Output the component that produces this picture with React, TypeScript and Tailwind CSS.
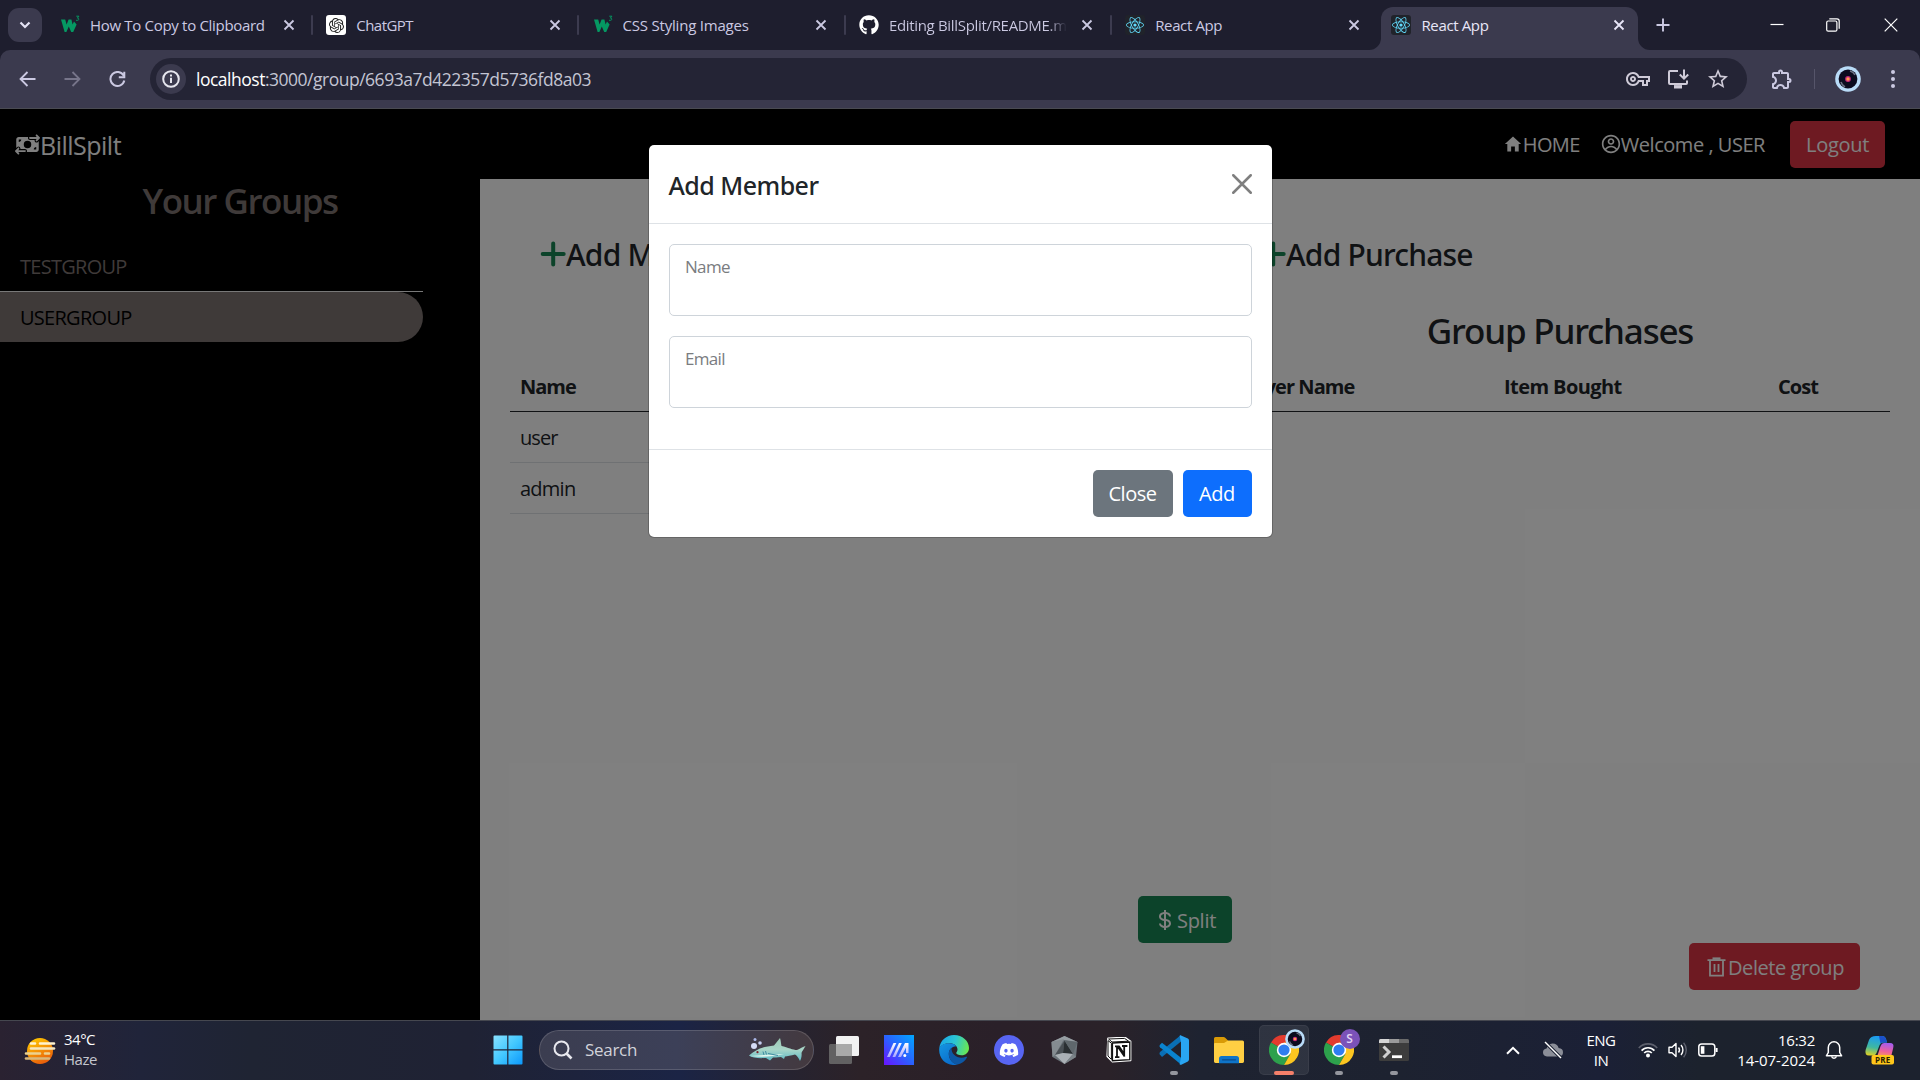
import type { ReactNode } from 'react';
import { FaMoneyBillTransfer } from 'react-icons/fa6';
import { IoMdHome } from 'react-icons/io';
import { CgProfile } from 'react-icons/cg';
import { BiDollar } from 'react-icons/bi';
import { FaReact, FaGithub, FaDiscord } from 'react-icons/fa';
import { SiOpenai } from 'react-icons/si';
import { MdOutlineVpnKey, MdStarBorder, MdOutlineExtension } from 'react-icons/md';

/* ---------- Browser chrome ---------- */

function W3Icon() {
  return (
    <svg width="20" height="20" viewBox="0 0 20 20" fill="none">
      <path d="M1 4.5 H5.2 L6.6 9.5 L8.6 4.5 H11.4 L12.6 9.5 L14 6.5 L16.6 9.5 L13.2 17 H11.2 L8.8 11.5 L6.4 17 H4.6 Z" fill="#059862" />
      <path d="M16.3 1.2 h2.6 l-1.5 1.9 c2.2 0 2 2.7 -1.3 2.2" stroke="#059862" strokeWidth="1" />
    </svg>
  );
}

function ChatIcon() {
  return (
    <div className="flex size-5 items-center justify-center rounded-[3px] bg-white text-[#1e1e1e]">
      <SiOpenai size={15} />
    </div>
  );
}

function ReactIcon() {
  return (
    <div className="flex size-5 items-center justify-center rounded-[3px] bg-[#20232a] text-[#61dafb]">
      <FaReact size={18} />
    </div>
  );
}

function CloseMark({ color }: { color: string }) {
  return (
    <svg width="12" height="12" viewBox="0 0 12 12" stroke={color} strokeWidth="1.8" className="shrink-0">
      <path d="M1.5 1.5 L10.5 10.5 M10.5 1.5 L1.5 10.5" />
    </svg>
  );
}

function Tab({ icon, children, divider }: { icon: ReactNode; children: ReactNode; divider?: boolean }) {
  return (
    <div className="flex h-full w-[266.3px] shrink-0 items-center pl-[13px]">
      <div className="w-[30px] shrink-0">{icon}</div>
      <div className="w-[178px] shrink-0 overflow-hidden text-[15px] leading-5 whitespace-nowrap text-[#cbc9e2]">{children}</div>
      <div className="flex w-[42px] shrink-0 justify-center pr-[1px]">
        <CloseMark color="#cbc9e2" />
      </div>
      {divider && <div className="ml-[1px] h-5 w-[2px] shrink-0 rounded bg-[#3c3b4f]" />}
    </div>
  );
}

function TabStrip() {
  return (
    <div className="flex h-[50px] w-full bg-[#1e1e2e]">
      <div className="flex w-[47px] shrink-0 items-center pl-2">
        <div className="flex h-[34px] w-[34px] items-center justify-center rounded-[11px] bg-[#3b3a4e]">
          <svg width="14" height="10" viewBox="0 0 14 10" fill="none" stroke="#e4e2f4" strokeWidth="2.2">
            <path d="M2.5 2.5 L7 7 L11.5 2.5" />
          </svg>
        </div>
      </div>
      <Tab divider icon={<W3Icon />}>
        <span className="tracking-[-0.31px]">How To Copy to Clipboard</span>
      </Tab>
      <Tab divider icon={<ChatIcon />}>
        <span className="tracking-[-0.55px]">ChatGPT</span>
      </Tab>
      <Tab divider icon={<W3Icon />}>
        <span className="tracking-[-0.21px]">CSS Styling Images</span>
      </Tab>
      <Tab divider icon={<FaGithub size={20} color="#fff" />}>
        <span className="bg-linear-to-r from-[#cbc9e2] from-90% to-[#1e1e2e] bg-clip-text tracking-[-0.32px] text-transparent">
          Editing BillSplit/README.m
        </span>
      </Tab>
      <Tab icon={<ReactIcon />}>
        <span className="tracking-[-0.37px]">React App</span>
      </Tab>
      <div className="relative ml-[3px] flex w-[257px] shrink-0 items-center self-end">
        <svg width="12" height="12" viewBox="0 0 12 12" className="absolute bottom-0 -left-3" fill="#3b3a4e">
          <path d="M12 0 V12 H0 A12 12 0 0 0 12 0 Z" />
        </svg>
        <svg width="12" height="12" viewBox="0 0 12 12" className="absolute -right-3 bottom-0" fill="#3b3a4e">
          <path d="M0 0 V12 H12 A12 12 0 0 1 0 0 Z" />
        </svg>
        <div className="flex h-[43px] w-full items-center rounded-t-[12px] bg-[#3b3a4e] pb-[7px] pl-[10px]">
          <div className="w-[30px] shrink-0">
            <ReactIcon />
          </div>
          <div className="w-[192px] text-[15px] leading-5 tracking-[-0.37px] text-[#e8e6f8]">React App</div>
          <CloseMark color="#e8e6f8" />
        </div>
      </div>
      <div className="flex flex-1 items-center pl-[18px]">
        <svg width="14" height="14" viewBox="0 0 14 14" stroke="#cbc9e2" strokeWidth="1.9">
          <path d="M7 0.5 V13.5 M0.5 7 H13.5" />
        </svg>
        <svg width="14" height="14" viewBox="0 0 14 14" stroke="#fff" strokeWidth="1.2" className="ml-[100px]">
          <path d="M0.5 6.5 H13.5" />
        </svg>
        <svg width="14" height="14" viewBox="0 0 14 14" fill="none" stroke="#fff" strokeWidth="1.2" className="ml-[42px]">
          <rect x="0.7" y="3" width="10.2" height="10.2" rx="1.5" />
          <path d="M3.3 0.8 H11 Q13.2 0.8 13.2 3 V10.8" />
        </svg>
        <svg width="14" height="14" viewBox="0 0 14 14" stroke="#fff" strokeWidth="1.2" className="ml-[44px]">
          <path d="M0.7 0.7 L13.3 13.3 M13.3 0.7 L0.7 13.3" />
        </svg>
      </div>
    </div>
  );
}

function Avatar({ size }: { size: number }) {
  return (
    <svg width={size} height={size} viewBox="0 0 26 26">
      <circle cx="13" cy="13" r="12.8" fill="#b9dcf8" />
      <circle cx="13" cy="13" r="9.4" fill="#0b0b1e" />
      <path d="M15 5 a8 8 0 0 1 5 4 M6 16 a8 8 0 0 0 4 5" stroke="#6b7183" strokeWidth="1.6" fill="none" />
      <circle cx="13" cy="13" r="2.9" fill="#c0267a" />
      <circle cx="13" cy="13" r="1.7" fill="#ff9a4a" />
    </svg>
  );
}

function Toolbar() {
  return (
    <div className="bg-[#1e1e2e]">
      <div className="flex h-[58px] items-center rounded-t-[10px] bg-[#3b3a4e]">
        <div className="flex w-[150px] shrink-0 items-center pl-[19px]">
          <svg width="17" height="16" viewBox="0 0 17 16" fill="none" stroke="#cbc9e2" strokeWidth="1.8">
            <path d="M16.5 8 H2 M8.5 1 L1.5 8 L8.5 15" />
          </svg>
          <svg width="17" height="16" viewBox="0 0 17 16" fill="none" stroke="#77758a" strokeWidth="1.8" className="ml-[28px]">
            <path d="M0.5 8 H15 M8.5 1 L15.5 8 L8.5 15" />
          </svg>
          <svg width="17" height="17" viewBox="0 0 17 17" fill="none" stroke="#cbc9e2" strokeWidth="2" className="ml-[28px]">
            <path d="M14.6 4.6 A7 7 0 1 0 15.3 9.5 M15.3 0.8 V6.3 H9.8" />
          </svg>
        </div>
        <div className="flex h-[42px] w-[1597px] shrink-0 items-center rounded-full bg-[#242435] pl-[6px]">
          <div className="flex size-[30px] items-center justify-center rounded-full bg-[#3b3a4e]">
            <svg width="18" height="18" viewBox="0 0 18 18" fill="none" stroke="#e6e6ee" strokeWidth="2">
              <circle cx="9" cy="9" r="7.8" />
              <path d="M9 7.8 V13 M9 4.6 V6.4" />
            </svg>
          </div>
          <div className="ml-[10px] flex-1 text-[17.5px] leading-6 tracking-[-0.49px] text-[#c3c5d3]">
            <span className="text-white">localhost</span>:3000/group/6693a7d422357d5736fd8a03
          </div>
          <MdOutlineVpnKey size={24} color="#cfcbd8" />
          <svg width="22" height="20" viewBox="0 0 22 20" fill="none" stroke="#cfcbd8" strokeWidth="2" className="ml-[17px]">
            <path d="M11 2 H3 Q2 2 2 3 V14 Q2 15 3 15 H19 Q20 15 20 14 V11.5" />
            <path d="M7 17.8 H15" strokeWidth="3.4" />
            <path d="M17 0.5 V9 M12.8 5.5 L17 9.7 L21.2 5.5" />
          </svg>
          <MdStarBorder size={24} color="#cfcbd8" className="mr-[17px] ml-[17px]" />
        </div>
        <MdOutlineExtension size={24} color="#cbc9e2" className="ml-[22.5px]" />
        <div className="ml-[20px] h-5 w-[1.5px] bg-[#56556a]" />
        <div className="ml-[19.5px]">
          <Avatar size={26} />
        </div>
        <svg width="6" height="20" viewBox="0 0 6 20" fill="#cbc9e2" className="ml-[29px]">
          <circle cx="3" cy="3" r="2" />
          <circle cx="3" cy="10" r="2" />
          <circle cx="3" cy="17" r="2" />
        </svg>
      </div>
      <div className="h-px bg-[#4a4b52]" />
    </div>
  );
}

/* ---------- Page ---------- */

function Navbar() {
  return (
    <div className="flex h-[70px] shrink-0 items-center bg-black pl-[15px] text-white">
      <FaMoneyBillTransfer size={25} />
      <div className="pt-px text-[25px] leading-9 tracking-[-0.51px]">BillSpilt</div>
      <div className="flex flex-1 items-center justify-end pr-[35px] text-[20px]">
        <IoMdHome size={20} className="mt-[-1px]" />
        <span className="mt-[2px] tracking-[-0.6px]">HOME</span>
        <CgProfile size={20} className="mt-[-1px] ml-[21px]" />
        <span className="mt-[2px] tracking-[-0.46px]">Welcome , USER</span>
        <div className="ml-[25px] flex h-[47px] w-[95px] items-center justify-center rounded-[5px] bg-[#dc3545] pt-[2px] tracking-[-0.29px]">
          Logout
        </div>
      </div>
    </div>
  );
}

function Sidebar() {
  return (
    <div className="w-[480px] shrink-0 bg-black">
      <div className="pt-[1px] text-center text-[35px] leading-[42px] font-semibold tracking-[-1.5px] text-[#7e7472]">Your Groups</div>
      <div className="mt-[19px] w-[423px] text-[20px]">
        <div className="flex h-[51px] items-center border-b border-[#f0f0f0] pt-[2px] pl-5 tracking-[-0.72px] text-[#7e7472]">
          TESTGROUP
        </div>
        <div className="flex h-[50px] items-center rounded-r-[25px] bg-[#7e7472] pt-[2px] pl-5 tracking-[-0.72px] text-black">
          USERGROUP
        </div>
      </div>
    </div>
  );
}

function AddHeading({ children }: { children: ReactNode }) {
  return (
    <div className="flex h-[36px] items-center pl-[30px]">
      <svg width="26" height="30" viewBox="0 0 26 30" stroke="#198754" strokeWidth="4" strokeLinecap="round">
        <path d="M13.2 4.5 V25.5 M2.7 15 H23.7" />
      </svg>
      <div className='pt-px text-[30px] leading-9 font-medium tracking-[-0.8px] whitespace-nowrap [font-family:"Noto_Sans",sans-serif]'>
        {children}
      </div>
    </div>
  );
}

function Members() {
  return (
    <div className="w-[720px] px-[30px] pt-[57px]">
      <AddHeading>Add Member</AddHeading>
      <div className="mt-[90px] text-[20px]">
        <div className="flex h-[50px] items-center border-b border-[#212529] pl-[10px] font-bold tracking-[-1px]">Name</div>
        <div className="flex h-[51px] items-center border-b border-[#dee2e6] pt-[2px] pl-[10px] tracking-[-0.9px]">user</div>
        <div className="flex h-[51px] items-center border-b border-[#dee2e6] pt-[2px] pl-[10px] tracking-[-0.75px]">admin</div>
      </div>
    </div>
  );
}

function Purchases() {
  return (
    <div className="w-[720px] px-[30px] pt-[57px]">
      <AddHeading>Add Purchase</AddHeading>
      <div className='mt-[38px] text-center text-[35px] leading-[42px] font-medium tracking-[-1.2px] [font-family:"Noto_Sans",sans-serif]'>
        Group Purchases
      </div>
      <div className="mt-[10px] flex h-[50px] items-center border-b border-[#212529] pl-[10px] text-[20px] font-bold">
        <div className="w-[264px] tracking-[-0.95px]">Buyer Name</div>
        <div className="w-[274px] tracking-[-0.58px]">Item Bought</div>
        <div className="tracking-[-0.94px]">Cost</div>
      </div>
    </div>
  );
}

function PageContent() {
  return (
    <div className="flex flex-1 flex-col bg-white text-[#212529]">
      <div className="flex flex-1">
        <Members />
        <Purchases />
      </div>
      <div className="flex pl-[658px] text-[20px] text-white">
        <div className="flex h-[47px] w-[94px] items-center rounded-[5px] bg-[#198754] pl-[15px]">
          <BiDollar size={24} />
          <span className="pt-[2px] tracking-[-0.29px]">Split</span>
        </div>
      </div>
      <div className="flex justify-end pr-[60px] pb-[30px] text-[20px] text-white">
        <div className="flex h-[47px] w-[171px] items-center rounded-[5px] bg-[#dc3545] pl-[18px]">
          <svg width="20" height="22" viewBox="0 0 20 22" fill="none" stroke="#fff" strokeWidth="1.8">
            <path d="M0.5 4.2 H18.5 M3 4.2 V19.6 H16 V4.2" />
            <path d="M5.5 2.6 H13.5" strokeWidth="2.4" />
            <path d="M7.5 8 V16 M11.5 8 V16" />
          </svg>
          <span className="ml-px pt-[2px] tracking-[-0.43px]">Delete group</span>
        </div>
      </div>
    </div>
  );
}

function Field({ label }: { label: string }) {
  return (
    <div className="h-[72px] rounded-[5px] border border-[#ced4da] pt-[10px] pl-[15.5px] text-[17px] leading-6 tracking-[-0.68px] text-[#7a7c7f]">
      {label}
    </div>
  );
}

function Modal() {
  return (
    <div className="absolute inset-0 flex items-start justify-center bg-black/50">
      <div className="mt-[35px] h-[394px] w-[625px] rounded-[6px] border border-black/20 bg-white bg-clip-padding text-[#212529]">
        <div className="flex h-[79px] items-center justify-between border-b border-[#dee2e6] px-5">
          <div className='pt-px text-[25px] leading-9 font-medium tracking-[-0.53px] [font-family:"Noto_Sans",sans-serif]'>Add Member</div>
          <svg width="20" height="20" viewBox="0 0 16 16" fill="none" stroke="#7f7f7f" strokeWidth="2" strokeLinecap="round">
            <path d="M1 1 L15 15 M15 1 L1 15" />
          </svg>
        </div>
        <div className="flex h-[225px] flex-col gap-[20px] px-5 pt-5">
          <Field label="Name" />
          <Field label="Email" />
        </div>
        <div className="flex h-[88px] items-center justify-end gap-[10px] border-t border-[#dee2e6] px-5 text-[20px] text-white">
          <div className="flex h-[47px] w-[80px] items-center justify-center rounded-[5px] bg-[#6c757d] pt-px tracking-[-0.49px]">Close</div>
          <div className="flex h-[47px] w-[69px] items-center justify-center rounded-[5px] bg-[#0d6efd] pt-px tracking-[-0.38px]">Add</div>
        </div>
      </div>
    </div>
  );
}

/* ---------- Taskbar ---------- */

function Cell({ children, active, dot }: { children: ReactNode; active?: boolean; dot?: boolean }) {
  return (
    <div className="relative flex h-[59px] w-[55px] shrink-0 items-center justify-center pb-[1px]">
      {active && <div className="absolute top-[4px] left-[2.5px] h-[50px] w-[50px] rounded-[5px] border border-white/5 bg-white/8" />}
      <div className="relative flex">{children}</div>
      {active && <div className="absolute bottom-[5px] h-1 w-5 rounded-full bg-[#f5806a]" />}
      {dot && <div className="absolute bottom-[5px] h-1 w-2 rounded-full bg-[#94969e]" />}
    </div>
  );
}

function WeatherIcon() {
  return (
    <svg width="32" height="28" viewBox="0 0 32 28">
      <defs>
        <linearGradient id="sun" x1="0.2" y1="0" x2="0.7" y2="1">
          <stop offset="0" stopColor="#ffc800" />
          <stop offset="1" stopColor="#e8590c" />
        </linearGradient>
      </defs>
      <circle cx="16" cy="14" r="13" fill="url(#sun)" />
      <g strokeWidth="2.6" strokeLinecap="round">
        <path d="M7 6.5 H11 M16 6.5 H30" stroke="#fff3cf" />
        <path d="M7 11.5 H30" stroke="#f6e7be" />
        <path d="M2 16.5 H16 M21 16.5 H25" stroke="#ecd28f" />
        <path d="M2 21.5 H25" stroke="#d9b87a" />
      </g>
    </svg>
  );
}

function WindowsLogo() {
  return (
    <svg width="30" height="30" viewBox="0 0 30 30" fill="url(#win)">
      <defs>
        <linearGradient id="win" gradientUnits="userSpaceOnUse" x1="0" y1="0" x2="30" y2="30">
          <stop offset="0" stopColor="#8be2ff" />
          <stop offset="0.5" stopColor="#43c8ff" />
          <stop offset="1" stopColor="#0a96fb" />
        </linearGradient>
      </defs>
      <path d="M1.5 0.5 H14.2 V14.2 H0.5 V1.5 Q0.5 0.5 1.5 0.5 Z M15.4 0.5 H28.5 Q29.5 0.5 29.5 1.5 V14.2 H15.4 Z M0.5 15.4 H14.2 V29.5 H1.5 Q0.5 29.5 0.5 28.5 Z M15.4 15.4 H29.5 V28.5 Q29.5 29.5 28.5 29.5 H15.4 Z" />
    </svg>
  );
}

function Shark() {
  return (
    <svg width="58" height="26" viewBox="0 0 58 26">
      <defs>
        <linearGradient id="shark" x1="0" y1="0" x2="0" y2="1">
          <stop offset="0" stopColor="#9cc9b4" />
          <stop offset="0.5" stopColor="#a9d6c8" />
          <stop offset="1" stopColor="#5fb9c6" />
        </linearGradient>
      </defs>
      <path
        d="M1 18.5 C8 12 16 9.5 26 8.5 L32 1 C33 4 33 7 33.5 9 C40 10.5 45 13 49 13 C52 12 55 9.5 57.5 9 C56 12 54 14 53.5 16 C54 19 53 22 52 24 C50.5 21 49 18.5 47 17.5 C43 18.5 39 19.2 37 19.5 L36 22 L33 20 C29 20.5 27 20.5 25 20.5 L22 23.5 L18 21 C11 21.5 4 21 1 18.5 Z"
        fill="url(#shark)"
      />
      <path d="M2 19 C12 20.5 24 20 36 17 C24 17.5 12 18 2 19 Z" fill="#dff5ee" />
      <path d="M15 14.5 L16 18 M17.5 14 L18.5 17.5 M20 16.5 L30 18.5" stroke="#3f8ba0" strokeWidth="1" />
      <circle cx="9.5" cy="15.2" r="1.1" fill="#7b1f2a" />
      <circle cx="6" cy="9" r="3" fill="#d5dcf6" />
      <circle cx="12" cy="6" r="1.8" fill="#c3cdf0" />
      <circle cx="7" cy="2.4" r="1.5" fill="#aab8e8" />
    </svg>
  );
}

function TaskView() {
  return (
    <svg width="30" height="28" viewBox="0 0 30 28">
      <rect x="7" y="0" width="23" height="20" rx="1.5" fill="#f2f2f2" />
      <rect x="0" y="8" width="23" height="20" rx="1.5" fill="#6a6a6a" fillOpacity="0.88" />
      <rect x="7" y="8" width="16" height="12" fill="#a9a9a9" />
    </svg>
  );
}

function MyAsus() {
  return (
    <svg width="30" height="30" viewBox="0 0 30 30">
      <defs>
        <linearGradient id="asus" x1="0" y1="1" x2="1" y2="0">
          <stop offset="0" stopColor="#6a12ff" />
          <stop offset="0.5" stopColor="#2a62ff" />
          <stop offset="1" stopColor="#00a8ff" />
        </linearGradient>
        <linearGradient id="asusBar" x1="0" y1="1" x2="0" y2="0">
          <stop offset="0" stopColor="#a9a6ff" />
          <stop offset="1" stopColor="#ffffff" />
        </linearGradient>
      </defs>
      <rect width="30" height="30" fill="url(#asus)" />
      <path d="M3 22 L9.5 8 H12.3 L5.8 22 Z" fill="url(#asusBar)" />
      <path d="M8.5 22 L15 8 H17.8 L11.3 22 Z" fill="url(#asusBar)" />
      <path d="M14 22 L21 8 H24.5 V18 H22 V12.5 L17 22 Z" fill="url(#asusBar)" />
      <circle cx="20.8" cy="20.6" r="1.5" fill="#fff" />
    </svg>
  );
}

function Edge() {
  return (
    <svg width="30" height="30" viewBox="0 0 30 30">
      <defs>
        <linearGradient id="edgeTop" x1="0" y1="0.4" x2="1" y2="0.6">
          <stop offset="0" stopColor="#1aa7e8" />
          <stop offset="0.5" stopColor="#2cc6d2" />
          <stop offset="1" stopColor="#6be84e" />
        </linearGradient>
        <linearGradient id="edgeLow" x1="0" y1="0" x2="0.6" y2="1">
          <stop offset="0" stopColor="#1597e2" />
          <stop offset="1" stopColor="#0a6ccb" />
        </linearGradient>
      </defs>
      <path d="M0.3 13 C1.2 5.5 7.4 0 15 0 C23.5 0 30 6 30 13 C30 17.6 26.6 20.3 22.6 20.3 C19.4 20.3 17.2 19 17.2 18 C17.2 17.4 18.5 16.6 18.5 14.5 C18.5 11 15 8.3 10.5 8.3 C6 8.3 2.4 10.2 0.3 13 Z" fill="url(#edgeTop)" />
      <path d="M0.3 13 C2.4 9.5 6 8.3 10.5 8.3 C13.5 8.3 16 9.6 17.3 11.3 C12.5 11.5 9.8 15 9.8 19 C9.8 24.3 14 28.6 18.6 29.6 C8 32 -1 24 0.3 13 Z" fill="url(#edgeLow)" />
      <path d="M12.5 12.8 C10.6 14.2 9.8 16.6 9.8 19 C9.8 24.6 14.2 29 18.6 29.6 C23 28.6 26 26 28 22.6 C28.4 21.8 27.8 21.4 27 21.8 C19.5 24.8 12 20 12.5 12.8 Z" fill="#0d57a4" />
    </svg>
  );
}

function Gem() {
  return (
    <svg width="27" height="28" viewBox="0 0 27 28">
      <path d="M13.5 0 L26.5 6 L25 21 L13.5 28 L1.5 21 L0.5 6 Z" fill="#6b7379" />
      <path d="M13.5 0 L26.5 6 L14 4 L0.5 6 Z" fill="#969da2" />
      <path d="M13 3 L0.5 6 L1.5 21 L4 19 Z" fill="#858c91" />
      <path d="M13.5 4.5 L4 19 L12 17 Z" fill="#4a5055" />
      <path d="M13.5 4.5 L12 17 L22 18 Z" fill="#2a2f32" />
      <path d="M13.5 4.5 L22 18 L26.5 6 Z" fill="#5f676c" />
      <path d="M4 19 L12 17 L22 18 L13.5 28 Z" fill="#aab0b5" />
      <path d="M22 18 L25 21 L13.5 28 Z" fill="#7b8388" />
    </svg>
  );
}

function Notion() {
  return (
    <svg width="26" height="26" viewBox="0 0 26 26">
      <path d="M2 1.2 L19 0.4 L24.6 4.4 V23.4 L6.4 24.8 L1.2 19.5 Z" fill="#fff" stroke="#fff" strokeWidth="1.6" strokeLinejoin="round" />
      <path d="M2.6 2 L18.6 1.4 L22.6 4.2 L6 5 Z M2 3.6 L5.4 6.2 V22.4 L2 19 Z" fill="#fff" stroke="#111" strokeWidth="1" />
      <path d="M6.4 6 L23.8 5 V22.6 L6.4 23.8 Z" fill="#fff" stroke="#111" strokeWidth="1.4" />
      <path d="M9 9.4 H13 L18.2 17 V9.8 M16 9 H21.4 M11 9.6 V20.2 M9 20.2 H13.4 M18.6 19.4 L12 10" stroke="#111" strokeWidth="1.8" fill="none" />
    </svg>
  );
}

function VSCode() {
  return (
    <svg width="30" height="30" viewBox="0 0 30 30">
      <path d="M0.8 20 L3 22.5 L22 7 V0.5 L1 17.5 Q0 18.8 0.8 20 Z" fill="#0a6fb5" transform="translate(0 -0.4)" />
      <path d="M0.8 10 L3 7.7 L22 22.8 V29.5 L1 12.3 Q0 11.2 0.8 10 Z" fill="#0a84d0" />
      <path d="M22 0.4 Q21.4 0 20.6 0.8 L22 7.6 V22.4 L20.6 29.2 Q21.4 30 22.3 29.7 L28.9 26.4 Q30 25.8 30 24.6 V5.4 Q30 4.2 28.9 3.6 Z" fill="#29a5f2" />
    </svg>
  );
}

function Explorer() {
  return (
    <svg width="30" height="27" viewBox="0 0 30 27">
      <path d="M0 1.5 Q0 0 1.5 0 H9.5 Q10.5 0 11.2 0.8 L14 3.6 V9 H0 Z" fill="#d99a06" />
      <path d="M0 7 Q0 6 1 6 H10 L14 3.4 H28.5 Q30 3.4 30 5 V24.6 Q30 26 28.5 26 H1.5 Q0 26 0 24.6 Z" fill="#ffcf43" />
      <path d="M5 26.3 V21.5 Q5 19 7.5 19 H22.5 Q25 19 25 21.5 V26.3 Z" fill="#0f74c8" />
      <path d="M8.5 22.8 H21.5" stroke="#0a4b8c" strokeWidth="1.2" strokeLinecap="round" />
    </svg>
  );
}

function Chrome() {
  return (
    <svg width="30" height="30" viewBox="0 0 30 30">
      <path d="M15 15 L2 7.5 A15 15 0 0 1 28 7.5 Z" fill="#e33b2e" />
      <path d="M15 15 L2 7.5 A15 15 0 0 0 15 30 L21.5 18.7 Z" fill="#2da14c" />
      <path d="M15 15 L21.5 18.7 L15 30 A15 15 0 0 0 28 7.5 H15 Z" fill="#fcc620" />
      <circle cx="15" cy="15" r="7.2" fill="#fff" />
      <circle cx="15" cy="15" r="5.6" fill="#2f7df0" />
    </svg>
  );
}

function Terminal() {
  return (
    <svg width="30" height="22" viewBox="0 0 30 22">
      <rect width="30" height="22" rx="1.5" fill="#3d3d3d" />
      <path d="M0 4 V1.5 Q0 0 1.5 0 H10 V4 Z" fill="#d6d6d6" />
      <rect x="10" width="10" height="4" fill="#9b9b9b" />
      <path d="M20 0 H28.5 Q30 0 30 1.5 V4 H20 Z" fill="#6a6a6a" />
      <path d="M4.5 7.5 L10 13 L4.5 18.5" stroke="#d0d0d0" strokeWidth="3" fill="none" />
      <path d="M13 17.7 H23" stroke="#fff" strokeWidth="2.8" />
    </svg>
  );
}

function Copilot() {
  return (
    <svg width="32" height="30" viewBox="0 0 32 30">
      <defs>
        <linearGradient id="cpA" x1="0.3" y1="0" x2="0.1" y2="1">
          <stop offset="0" stopColor="#1c9cf0" />
          <stop offset="0.55" stopColor="#3fb8a0" />
          <stop offset="1" stopColor="#e8d21c" />
        </linearGradient>
        <linearGradient id="cpB" x1="0.6" y1="0" x2="0.4" y2="1">
          <stop offset="0" stopColor="#a25cf0" />
          <stop offset="0.6" stopColor="#f0609a" />
          <stop offset="1" stopColor="#f79a5a" />
        </linearGradient>
      </defs>
      <path d="M12 1 H18 Q21 1 22 4 L23 7.5 H19 Q16.5 7.5 15.6 10 L12.5 18 Q11.5 20.5 9 20.5 H5 Q0.5 20.5 1.6 15 L5 5 Q6.6 1 12 1 Z" fill="url(#cpA)" />
      <path d="M15 1 H18 Q21 1 22 4 L23 7.5 H19 Q17.5 7.5 16.5 8.5 Z" fill="#1b50c8" />
      <path d="M20 8 H26 Q30.5 8 29.2 13 L27 22 H13 L16.6 11 Q17.6 8 20 8 Z" fill="url(#cpB)" />
      <rect x="7.5" y="20" width="22.5" height="9.6" rx="2" fill="#ffc61a" />
    </svg>
  );
}

function Tray() {
  return (
    <div className="flex flex-1 items-center pb-px text-[15px] leading-5 text-white">
      <svg width="14" height="9" viewBox="0 0 14 9" fill="none" stroke="#fff" strokeWidth="2" className="ml-[84.5px]">
        <path d="M1 7.7 L7 1.8 L13 7.7" />
      </svg>
      <svg width="22" height="18" viewBox="0 0 22 18" className="ml-[22px]">
        <path d="M5 15.5 Q1 15 1 11.5 Q1 8 4.6 7.6 Q5.5 3 10.5 2.4 Q15.5 2.4 16.6 7 Q21 7.4 21 11.3 Q21 15 17.3 15.5 Z" fill="#8b8e98" />
        <path d="M3 1 L19 17" stroke="#1c2133" strokeWidth="3.4" />
        <path d="M3 1 L19 17" stroke="#fff" strokeWidth="1.4" />
      </svg>
      <div className="ml-[17px] w-[40px] text-center tracking-[-0.5px]">
        <div>ENG</div>
        <div>IN</div>
      </div>
      <svg width="20" height="16" viewBox="0 0 20 16" fill="none" strokeWidth="1.7" className="ml-[17px]">
        <path d="M0.8 6 A12.5 12.5 0 0 1 19.2 6" stroke="#5d606d" />
        <path d="M3.6 8.6 A8.6 8.6 0 0 1 16.4 8.6" stroke="#fff" />
        <path d="M6.2 11 A5.2 5.2 0 0 1 13.8 11" stroke="#fff" />
        <circle cx="10" cy="13.4" r="2" fill="#fff" />
      </svg>
      <svg width="20" height="18" viewBox="0 0 20 18" fill="none" stroke="#fff" strokeWidth="1.4" className="ml-[10px]">
        <path d="M1 6.3 H4 L8 2.5 V15.5 L4 11.7 H1 Z" strokeLinejoin="round" />
        <path d="M10.5 6.5 A4 4 0 0 1 10.5 11.5 M13 4 A7.5 7.5 0 0 1 13 14" />
        <path d="M15.6 1.8 A11 11 0 0 1 15.6 16.2" stroke="#5d606d" />
      </svg>
      <svg width="20" height="14" viewBox="0 0 20 14" fill="none" stroke="#fff" strokeWidth="1.5" className="ml-[10px]">
        <rect x="0.8" y="1" width="16" height="12" rx="2.8" />
        <rect x="2.8" y="3.2" width="3.6" height="7.6" fill="#fff" stroke="none" />
        <path d="M18.6 5 V9" strokeWidth="2" />
      </svg>
      <div className="ml-[15px] w-[82px] pb-px text-right">
        <div className="tracking-[-0.25px]">16:32</div>
        <div className="tracking-[-0.05px]">14-07-2024</div>
      </div>
      <svg width="18" height="20" viewBox="0 0 18 20" fill="none" stroke="#fff" strokeWidth="1.5" className="ml-[10px]">
        <path d="M3.3 12.5 V7.5 A5.7 5.7 0 0 1 14.7 7.5 V12.5 L16.6 15.8 H1.4 Z" strokeLinejoin="round" />
        <path d="M6.6 16.4 A2.5 2.5 0 0 0 11.4 16.4" />
      </svg>
      <div className="relative ml-[21px]">
        <Copilot />
        <span className="absolute bottom-0 left-[7.5px] w-[22.5px] text-center text-[8px] leading-[10px] font-bold tracking-[0.3px] text-[#2a2200]">
          PRE
        </span>
      </div>
    </div>
  );
}

function Taskbar() {
  return (
    <div className="flex h-[60px] items-center border-t border-[#45474f] bg-[linear-gradient(90deg,#2a2231_0px,#20243a_140px,#1f2433_250px,#1f2234_470px,#1b2445_680px,#262330_790px,#2c2228_860px,#2a2029_1000px,#2a2229_1110px,#1e2331_1200px,#1d2230_1400px,#1b2036_1600px,#1c222d_1700px,#1c222e_1920px)]">
      <div className="flex w-[480px] shrink-0 items-center pl-[24px]">
        <WeatherIcon />
        <div className="ml-[8px] pb-[4px] text-[15px] leading-5 text-white">
          <div className="tracking-[-0.5px]">34°C</div>
          <div className="tracking-[-0.46px] text-[#c4c6ce]">Haze</div>
        </div>
      </div>
      <Cell>
        <WindowsLogo />
      </Cell>
      <div className="mb-px ml-[4px] flex h-[40px] w-[275px] shrink-0 items-center rounded-full border border-white/15 bg-linear-to-r from-[#3b3d50] via-[#3c4058] to-[#43393f] pl-[13px]">
        <svg width="20" height="20" viewBox="0 0 20 20" fill="none" stroke="#e8e8ee" strokeWidth="2">
          <circle cx="8.5" cy="8.5" r="7" />
          <path d="M13.5 13.5 L18.5 18.5" strokeWidth="2.6" />
        </svg>
        <span className="ml-[12px] flex-1 text-[17px] tracking-[-0.3px] text-[#d2d3da]">Search</span>
        <Shark />
        <div className="w-[7px]" />
      </div>
      <div className="ml-[2.5px] flex">
        <Cell><TaskView /></Cell>
        <Cell><MyAsus /></Cell>
        <Cell><Edge /></Cell>
        <Cell>
          <div className="flex size-[30px] items-center justify-center rounded-full bg-[#5865f2]">
            <FaDiscord size={20} color="#fff" />
          </div>
        </Cell>
        <Cell><Gem /></Cell>
        <Cell><Notion /></Cell>
        <Cell dot><VSCode /></Cell>
        <Cell><Explorer /></Cell>
        <Cell active>
          <Chrome />
          <div className="absolute -top-[6px] left-[15.5px] w-5">
            <Avatar size={20} />
          </div>
        </Cell>
        <Cell dot>
          <Chrome />
          <div className="absolute -top-[6px] left-[15.5px] flex size-5 items-center justify-center rounded-full bg-[#7b52b8] text-[12px] font-semibold text-[#e2d6f5]">
            S
          </div>
        </Cell>
        <Cell dot><Terminal /></Cell>
      </div>
      <Tray />
    </div>
  );
}

export default function App() {
  return (
    <div className='flex h-[1080px] w-[1920px] flex-col overflow-hidden bg-black [font-family:"Open_Sans","Noto_Sans",sans-serif]'>
      <TabStrip />
      <Toolbar />
      <div className="relative flex h-[911px] shrink-0 flex-col">
        <Navbar />
        <div className="flex flex-1">
          <Sidebar />
          <PageContent />
        </div>
        <Modal />
      </div>
      <Taskbar />
    </div>
  );
}
